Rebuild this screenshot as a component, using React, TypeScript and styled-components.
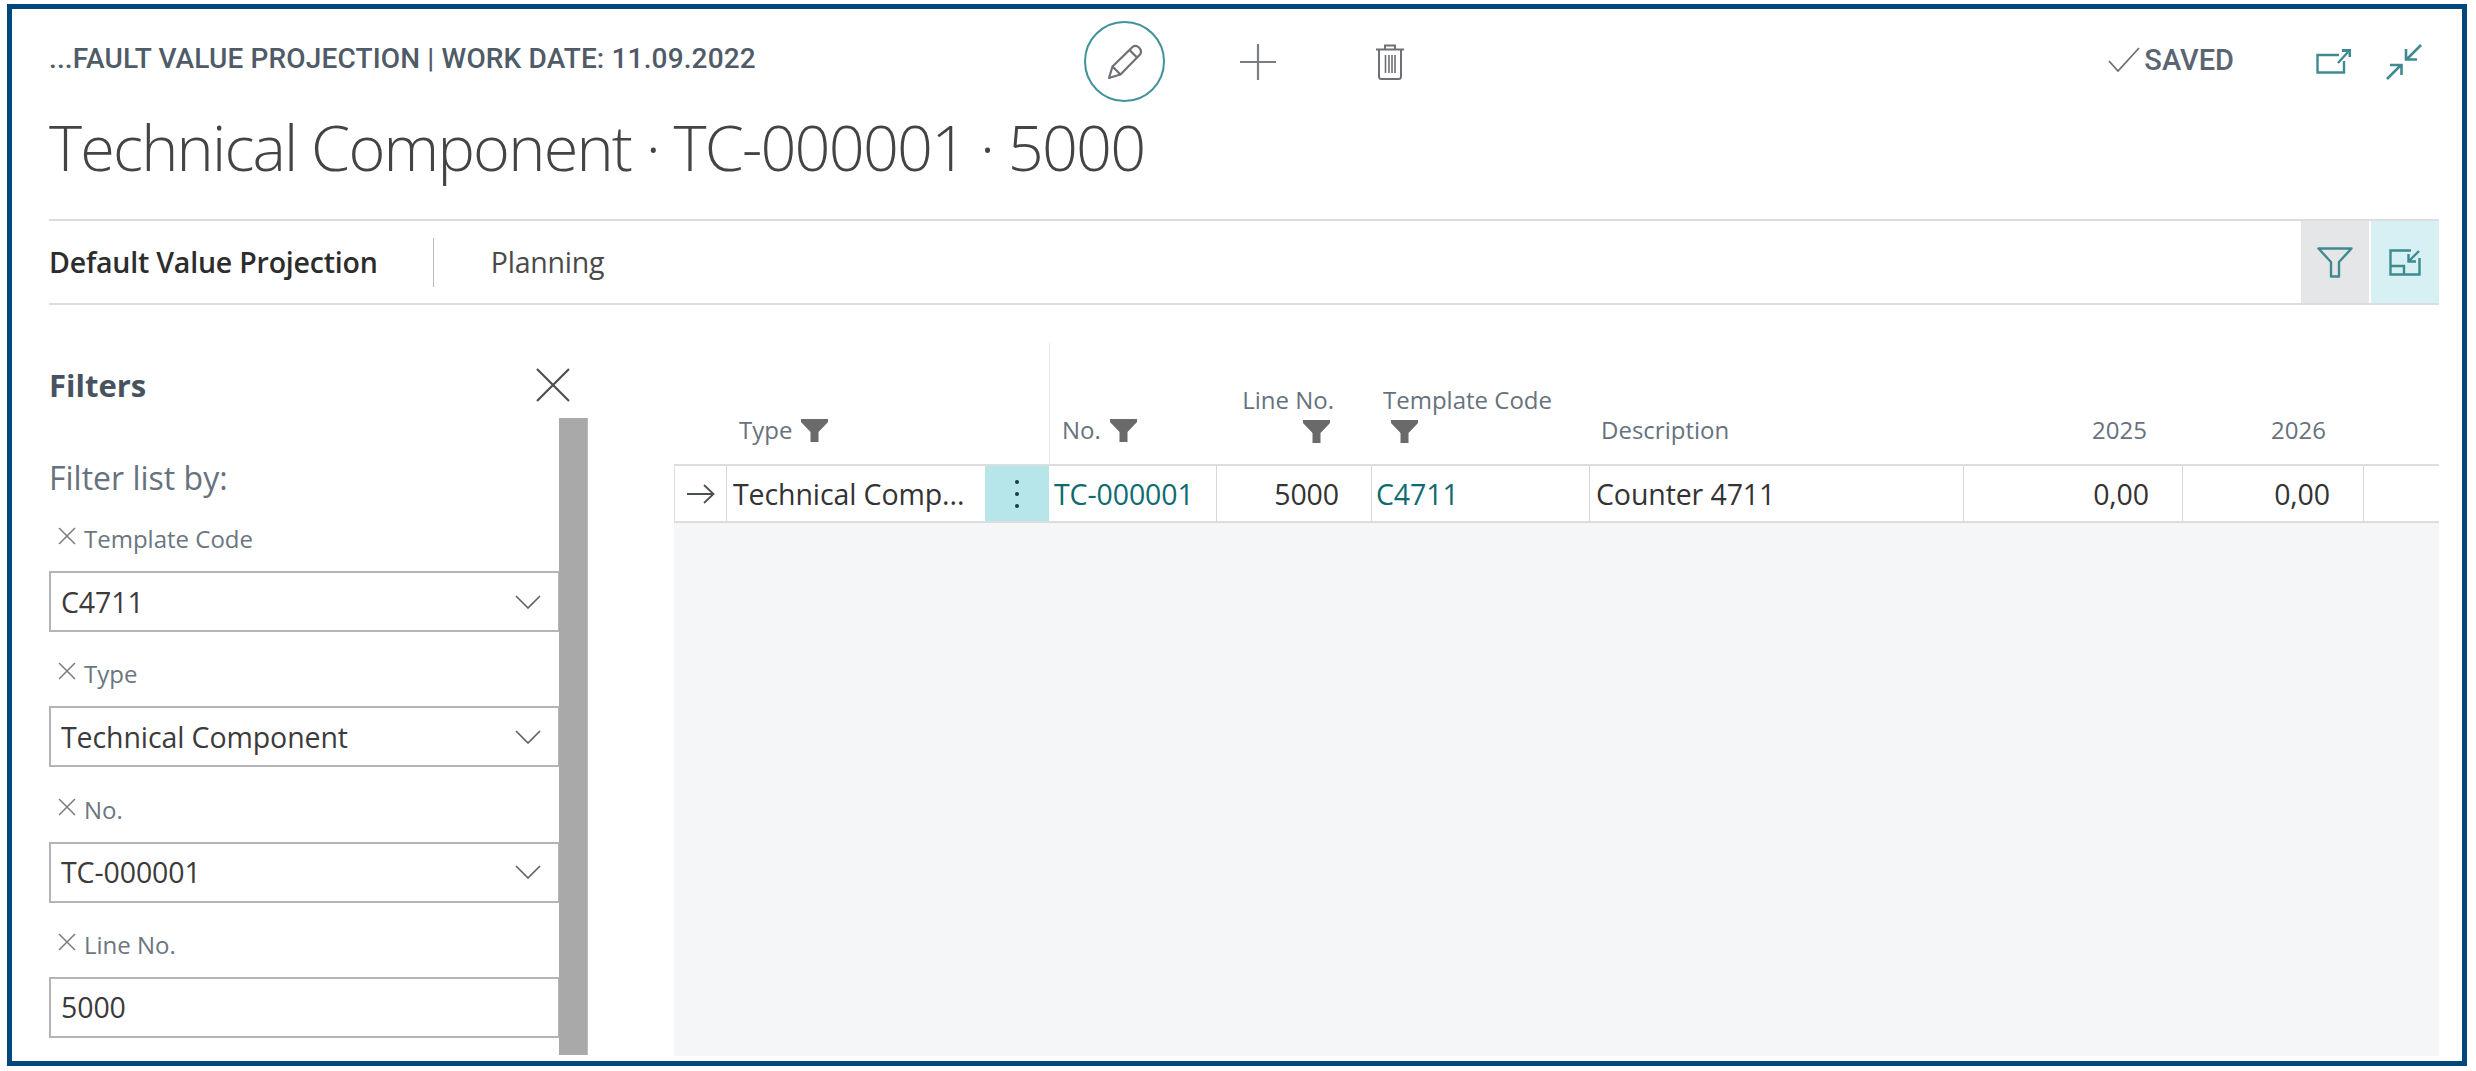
import styled, { createGlobalStyle } from 'styled-components'

const GlobalStyle = createGlobalStyle`
  html, body {
    margin: 0;
    padding: 0;
    background: #fff;
  }

  body {
    font-family: 'Open Sans', 'Liberation Sans', sans-serif;
    overflow: hidden;
  }
`

const COLUMNS = '53px 258px 64px 168px 155px 218px 374px 219px 181px 75px'

const Frame = styled.div`
  box-sizing: border-box;
  width: 2460px;
  height: 1062px;
  margin: 4px 0 0 7px;
  padding: 0 23px 0 37px;
  border: 5px solid #00477c;
  background: #fff;
  overflow: hidden;
`

const Header = styled.header`
  height: 210px;
`

const TopBar = styled.div`
  display: flex;
  align-items: center;
  height: 81px;
  padding: 12px 17px 0 0;
`

const Breadcrumb = styled.div`
  width: 1035px;
  flex: none;
  margin-top: -6px;
  font-family: Roboto, 'Liberation Sans', sans-serif;
  font-size: 28px;
  font-weight: 500;
  letter-spacing: 0.15px;
  color: #4f5b67;
  white-space: nowrap;
`

const EditButton = styled.div`
  box-sizing: border-box;
  display: flex;
  align-items: center;
  justify-content: center;
  flex: none;
  width: 81px;
  height: 81px;
  border: 2px solid #41929a;
  border-radius: 50%;
`

const BarIcon = styled.div<{ $before: number }>`
  display: flex;
  flex: none;
  margin-left: ${({ $before }) => $before}px;
`

const Saved = styled.div`
  display: flex;
  align-items: center;
  gap: 4px;
  margin: -4px 82px 0 auto;
  font-family: Roboto, 'Liberation Sans', sans-serif;
  font-size: 29px;
  font-weight: 500;
  letter-spacing: 0;
  color: #5a6571;
`

const Title = styled.h1`
  margin: 1px 0 0;
  font-size: 63px;
  line-height: 88px;
  font-weight: 300;
  letter-spacing: -1.8px;
  color: #444;
  white-space: nowrap;
`

const TabBar = styled.nav`
  box-sizing: border-box;
  display: flex;
  align-items: center;
  height: 86px;
  border-top: 2px solid #dcdddf;
  border-bottom: 2px solid #dcdddf;
`

const Tab = styled.div<{ $active?: boolean }>`
  font-size: 28.5px;
  font-weight: ${({ $active }) => ($active ? 600 : 400)};
  letter-spacing: -0.2px;
  color: ${({ $active }) => ($active ? '#2c2c2c' : '#4a4a4a')};
`

const TabDivider = styled.div`
  width: 1px;
  height: 49px;
  margin: 0 57px 0 55px;
  background: #b9bcbf;
`

const TabActions = styled.div`
  display: flex;
  gap: 2px;
  align-self: stretch;
  margin-left: auto;
`

const TabAction = styled.div<{ $tone: 'grey' | 'teal' }>`
  display: flex;
  align-items: center;
  justify-content: center;
  width: 68px;
  background: ${({ $tone }) => ($tone === 'grey' ? '#e5e6e8' : '#d6f0f3')};
`

const Body = styled.div`
  display: flex;
  align-items: stretch;
  height: 750px;
`

const FilterPanel = styled.aside`
  display: flex;
  flex-direction: column;
  flex: none;
  width: 539px;
  margin-right: 86px;
`

const PanelHead = styled.div`
  display: flex;
  align-items: center;
  justify-content: space-between;
  flex: none;
  height: 113px;
  padding: 0 18px 0 0;
`

const PanelTitle = styled.div`
  margin-top: 47px;
  font-size: 31px;
  font-weight: 700;
  color: #46535f;
`

const CloseIcon = styled.div`
  display: flex;
  margin-top: 47px;
`

const PanelBody = styled.div`
  display: flex;
  flex: none;
  height: 637px;
`

const FilterFields = styled.div`
  flex: none;
  width: 510px;
`

const ScrollTrack = styled.div`
  box-sizing: border-box;
  flex: none;
  width: 29px;
  border-right: 1px solid #bbb;
  background: #a9a9a9;
`

const ListCaption = styled.div`
  height: 102px;
  padding-top: 41px;
  box-sizing: border-box;
  font-size: 32px;
  line-height: 38px;
  color: #66727d;
`

const Field = styled.div`
  height: 135.33px;
`

const FieldLabel = styled.div`
  box-sizing: border-box;
  display: flex;
  align-items: flex-start;
  gap: 8px;
  height: 51px;
  padding: 4px 0 0 9px;
  font-size: 24px;
  line-height: 30px;
  color: #6b7681;
`

const LabelCross = styled.div`
  display: flex;
  margin-top: 3px;
`

const FieldInput = styled.div`
  box-sizing: border-box;
  display: flex;
  align-items: center;
  justify-content: space-between;
  height: 61px;
  padding: 0 17px 0 10px;
  border: 2px solid #b4b4b4;
  border-right-width: 1px;
  font-size: 28.5px;
  letter-spacing: -0.1px;
  color: #3b3b3b;
`

const Table = styled.section`
  display: flex;
  flex-direction: column;
  flex: none;
  width: 1765px;
  height: 750px;
`

const HeaderGrid = styled.div`
  display: grid;
  grid-template-columns: ${COLUMNS};
  flex: none;
  height: 121px;
  margin-top: 38px;
`

const HeadCell = styled.div<{ $col: number; $span?: number; $end?: boolean; $rule?: boolean }>`
  box-sizing: border-box;
  display: flex;
  flex-direction: column;
  justify-content: flex-end;
  grid-column: ${({ $col, $span }) => `${$col} / span ${$span ?? 1}`};
  align-items: ${({ $end }) => ($end ? 'flex-end' : 'flex-start')};
  padding-bottom: 19px;
  border-left: ${({ $rule }) => ($rule ? '1px solid #ececec' : '0')};
  font-size: 24px;
  line-height: 30px;
  color: #67727d;
`

const HeadLabel = styled.div<{ $left?: number; $right?: number }>`
  display: flex;
  align-items: center;
  gap: 9px;
  margin-left: ${({ $left }) => $left ?? 0}px;
  margin-right: ${({ $right }) => $right ?? 0}px;
  white-space: nowrap;
`

const HeadFunnel = styled.div<{ $left?: number; $right?: number }>`
  display: flex;
  height: 25px;
  margin-top: 5px;
  margin-left: ${({ $left }) => $left ?? 0}px;
  margin-right: ${({ $right }) => $right ?? 0}px;
`

const RowGrid = styled.div`
  box-sizing: border-box;
  display: grid;
  grid-template-columns: ${COLUMNS};
  flex: none;
  height: 59px;
  border-top: 2px solid #dcdddf;
  border-bottom: 2px solid #dcdddf;
  background: #fff;
`

const RowCell = styled.div<{ $end?: boolean; $pad?: number; $link?: boolean; $open?: boolean }>`
  box-sizing: border-box;
  display: flex;
  align-items: center;
  justify-content: ${({ $end }) => ($end ? 'flex-end' : 'flex-start')};
  padding: ${({ $end, $pad }) => ($end ? `0 ${$pad ?? 0}px 0 0` : `0 0 0 ${$pad ?? 0}px`)};
  border-right: ${({ $open }) => ($open ? '0' : '1px solid #d6d6d6')};
  font-size: 28.5px;
  letter-spacing: -0.1px;
  color: ${({ $link }) => ($link ? '#0f6b70' : '#333')};
  white-space: nowrap;
`

const ArrowCell = styled(RowCell)`
  border-left: 1px solid #dcdddf;
  justify-content: center;
`

const MenuCell = styled.div`
  display: flex;
  align-items: center;
  justify-content: center;
  background: #b7e6ea;
`

const EmptyArea = styled.div`
  flex: none;
  height: 533px;
  background: #f5f6f8;
`

const PencilIcon = () => (
  <svg width="36" height="36" viewBox="0 0 36 36" fill="none" stroke="#6e7075" strokeWidth="2.2" strokeLinejoin="round">
    <path d="M2 34 L5.5 22.5 L25.5 3 Q28.5 0.5 32 3.5 Q35.5 7 33 10.5 L13.5 30.5 Z" />
    <path d="M5.5 22.5 L13.5 30.5 M22.5 6 L30 13.5" />
  </svg>
)

const PlusIcon = () => (
  <svg width="36" height="36" viewBox="0 0 36 36" stroke="#7b7e83" strokeWidth="2.2">
    <path d="M18 0 V36 M0 18 H36" />
  </svg>
)

const TrashIcon = () => (
  <svg width="28" height="36" viewBox="0 0 28 36" fill="none" stroke="#6e7075" strokeWidth="2">
    <path d="M0 5.5 H28 M9 5 V1.5 H19 V5" />
    <path d="M3 6 V32.5 Q3 35 5.5 35 H22.5 Q25 35 25 32.5 V6" />
    <path d="M9.5 11 V29 M13 11 V29 M16 11 V29 M19 11 V29" strokeWidth="1.6" />
  </svg>
)

const CheckIcon = () => (
  <svg width="32" height="25" viewBox="0 0 32 25" fill="none" stroke="#6e7075" strokeWidth="1.8">
    <path d="M1 14 L10 24 L31 1" />
  </svg>
)

const OpenIcon = () => (
  <svg width="35" height="25" viewBox="0 0 35 25" fill="none" stroke="#3f8a91" strokeWidth="2.4">
    <path d="M23 6 H1.5 V23.5 H28 V12" />
    <path d="M22 14 L32 3" />
    <path d="M26 1.5 H34 V8" strokeWidth="3" />
  </svg>
)

const CollapseIcon = () => (
  <svg width="36" height="36" viewBox="0 0 36 36" fill="none" stroke="#3f8a91" strokeWidth="2.6">
    <path d="M35 1 L21 15 M20 5 V15.5 H31" />
    <path d="M1 35 L15 21 M4 21 H15.5 V31" />
  </svg>
)

const FunnelOutline = () => (
  <svg width="36" height="31" viewBox="0 0 36 31" fill="none" stroke="#3f8a91" strokeWidth="2.4" strokeLinejoin="round">
    <path d="M1.5 1.5 H34.5 L22 15 V29.5 H14 V15 Z" />
  </svg>
)

const ExpandPaneIcon = () => (
  <svg width="32" height="27" viewBox="0 0 32 27" fill="none" stroke="#3f8a91" strokeWidth="2.4">
    <path d="M22 1.5 H1.5 V25.5 H30.5 V9" />
    <path d="M1.5 17 H15 V25.5" />
    <path d="M30 2 L20 12 M19.5 5 V12.5 H27" />
  </svg>
)

const LargeCross = () => (
  <svg width="34" height="34" viewBox="0 0 34 34" stroke="#4b4f54" strokeWidth="2.2">
    <path d="M1 1 L33 33 M33 1 L1 33" />
  </svg>
)

const SmallCross = () => (
  <svg width="18" height="18" viewBox="0 0 18 18" stroke="#777b80" strokeWidth="1.5">
    <path d="M1 1 L17 17 M17 1 L1 17" />
  </svg>
)

const Chevron = () => (
  <svg width="26" height="14" viewBox="0 0 26 14" fill="none" stroke="#5c5f63" strokeWidth="1.6">
    <path d="M1 1 L13 13 L25 1" />
  </svg>
)

const SolidFunnel = () => (
  <svg width="27" height="23" viewBox="0 0 27 23" fill="#6a6a6a">
    <path d="M0 0 H27 V3 L17.5 13 V23 H9.5 V13 L0 3 Z" />
  </svg>
)

const RowArrow = () => (
  <svg width="28" height="20" viewBox="0 0 28 20" fill="none" stroke="#4b4f54" strokeWidth="1.8">
    <path d="M0 10 H26 M17 1 L26.5 10 L17 19" />
  </svg>
)

const Dots = () => (
  <svg width="6" height="30" viewBox="0 0 6 30" fill="#1c3a40">
    <circle cx="3" cy="3" r="2" />
    <circle cx="3" cy="15" r="2" />
    <circle cx="3" cy="27" r="2" />
  </svg>
)

const filters = [
  { label: 'Template Code', value: 'C4711', lookup: true },
  { label: 'Type', value: 'Technical Component', lookup: true },
  { label: 'No.', value: 'TC-000001', lookup: true },
  { label: 'Line No.', value: '5000', lookup: false },
]

const App = () => (
  <>
    <GlobalStyle />
    <Frame>
      <Header>
        <TopBar>
          <Breadcrumb>...FAULT VALUE PROJECTION | WORK DATE: 11.09.2022</Breadcrumb>
          <EditButton>
            <PencilIcon />
          </EditButton>
          <BarIcon $before={75}>
            <PlusIcon />
          </BarIcon>
          <BarIcon $before={100}>
            <TrashIcon />
          </BarIcon>
          <Saved>
            <CheckIcon />
            SAVED
          </Saved>
          <BarIcon $before={0}>
            <OpenIcon />
          </BarIcon>
          <BarIcon $before={35}>
            <CollapseIcon />
          </BarIcon>
        </TopBar>
        <Title>Technical Component · TC-000001 · 5000</Title>
      </Header>

      <TabBar>
        <Tab $active>Default Value Projection</Tab>
        <TabDivider />
        <Tab>Planning</Tab>
        <TabActions>
          <TabAction $tone="grey">
            <FunnelOutline />
          </TabAction>
          <TabAction $tone="teal">
            <ExpandPaneIcon />
          </TabAction>
        </TabActions>
      </TabBar>

      <Body>
        <FilterPanel>
          <PanelHead>
            <PanelTitle>Filters</PanelTitle>
            <CloseIcon>
              <LargeCross />
            </CloseIcon>
          </PanelHead>
          <PanelBody>
            <FilterFields>
              <ListCaption>Filter list by:</ListCaption>
              {filters.map((filter) => (
                <Field key={filter.label}>
                  <FieldLabel>
                    <LabelCross>
                      <SmallCross />
                    </LabelCross>
                    {filter.label}
                  </FieldLabel>
                  <FieldInput>
                    {filter.value}
                    {filter.lookup && <Chevron />}
                  </FieldInput>
                </Field>
              ))}
            </FilterFields>
            <ScrollTrack />
          </PanelBody>
        </FilterPanel>

        <Table>
          <HeaderGrid>
            <HeadCell $col={2} $span={2}>
              <HeadLabel $left={12}>
                Type
                <SolidFunnel />
              </HeadLabel>
            </HeadCell>
            <HeadCell $col={4} $rule>
              <HeadLabel $left={12}>
                No.
                <SolidFunnel />
              </HeadLabel>
            </HeadCell>
            <HeadCell $col={5} $end>
              <HeadLabel $right={38}>Line No.</HeadLabel>
              <HeadFunnel $right={42}>
                <SolidFunnel />
              </HeadFunnel>
            </HeadCell>
            <HeadCell $col={6}>
              <HeadLabel $left={11}>Template Code</HeadLabel>
              <HeadFunnel $left={19}>
                <SolidFunnel />
              </HeadFunnel>
            </HeadCell>
            <HeadCell $col={7}>
              <HeadLabel $left={11}>Description</HeadLabel>
            </HeadCell>
            <HeadCell $col={8} $end>
              <HeadLabel $right={36}>2025</HeadLabel>
            </HeadCell>
            <HeadCell $col={9} $end>
              <HeadLabel $right={38}>2026</HeadLabel>
            </HeadCell>
          </HeaderGrid>
          <RowGrid>
            <ArrowCell>
              <RowArrow />
            </ArrowCell>
            <RowCell $pad={6} $open>Technical Comp...</RowCell>
            <MenuCell>
              <Dots />
            </MenuCell>
            <RowCell $pad={5} $link>TC-000001</RowCell>
            <RowCell $end $pad={32}>5000</RowCell>
            <RowCell $pad={4} $link>C4711</RowCell>
            <RowCell $pad={6}>Counter 4711</RowCell>
            <RowCell $end $pad={33}>0,00</RowCell>
            <RowCell $end $pad={33}>0,00</RowCell>
            <RowCell $open />
          </RowGrid>
          <EmptyArea />
        </Table>
      </Body>
    </Frame>
  </>
)

export default App
